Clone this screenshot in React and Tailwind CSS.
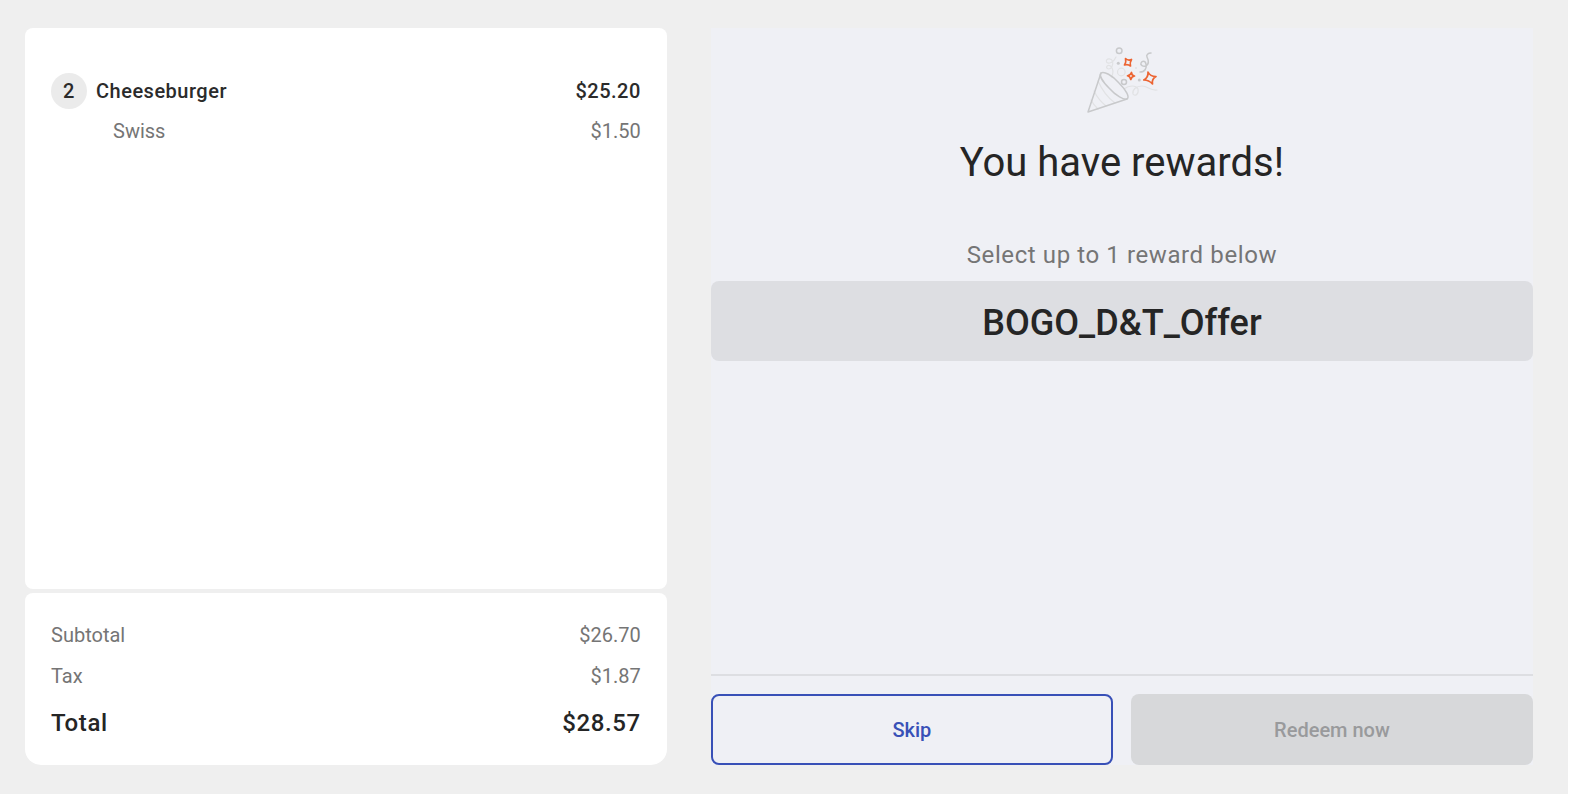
const order = {
  items: [
    {
      qty: 2,
      name: 'Cheeseburger',
      price: '$25.20',
      modifiers: [{ name: 'Swiss', price: '$1.50' }]
    }
  ],
  subtotal: '$26.70',
  tax: '$1.87',
  total: '$28.57'
};

const rewards = ['BOGO_D&T_Offer'];

const ConfettiIcon = () => (
  <svg className="w-[90px] h-[84px]" viewBox="-3 0 90 84" fill="none" strokeLinecap="round" strokeLinejoin="round" aria-hidden="true">
    <g stroke="#e1e2e4" strokeWidth="1.2">
      <path d="M18 45c4 9 10 17 17 22M14 55c3 6 7 11 12 15M11 64c2 4 4 6 7 9" />
      <path d="M36 21c-2 5-8 8-9.500 5-1-4 5-4 6-1 1 4-1 8-4 8-4-1-1-5 2-3 3 3 3 7 1 11" />
      <circle cx="41.300" cy="36" r="3.800" />
      <circle cx="56" cy="32" r="1" fill="#e1e2e4" stroke="none" />
      <path d="M44 53c5-4 12-4 14 0 1 5-3 8-5 5-1-4 3-8 9-8 6 0 8 5 15 4" />
    </g>
    <g stroke="#c8c9cb" strokeWidth="1.5">
      <path d="M21 37 8 76l39-13" />
      <path d="M21 37c3-2 11 2 18 10 7 7 11 14 8 16-3 1-11-3-18-11-7-7-10-13-8-15Z" />
      <circle cx="39.200" cy="14.800" r="2.800" />
      <circle cx="44" cy="46" r="2.500" />
      <path d="M71 17c-3 0-5 2-4 4 2 4 2 7-1 9-3 1-6-1-5-3s4-3 5 1-1 8-6 8" />
    </g>
    <circle cx="38.300" cy="27.300" r="1.500" fill="#c8c9cb" />
    <circle cx="59.300" cy="44" r="1.500" fill="#c8c9cb" />
    <g stroke="#ec6432" strokeWidth="1.700">
      <path d="M45.500 22.500Q48 25 51.500 23.500 49.500 26.500 50.500 30 48 28 44.500 29 46.500 26 45.500 22.500Z" />
      <path d="M51.500 36.500Q51.500 39.500 54.500 40 51.500 40.500 50.800 43.500 50.200 40.500 47.500 39.800 50.500 39.300 51.500 36.500Z" />
      <path d="M68 36Q70 40.500 76 40.500 71.500 43 72.500 48 69 44 63.800 44 68.500 41.500 68 36Z" />
    </g>
  </svg>
);

const SummaryRow = ({ label, value }) => (
  <div className="flex justify-between text-xl leading-[41px] text-[#757575]">
    <dt>{label}</dt>
    <dd>{value}</dd>
  </div>
);

const OrderItem = ({ item }) => (
  <li>
    <div className="flex items-center h-9 text-xl font-medium tracking-wide text-[#2b2b2b]">
      <span className="flex items-center justify-center w-9 h-9 mr-[9px] rounded-full bg-[#ebebeb]">{item.qty}</span>
      <span className="flex-1">{item.name}</span>
      <span>{item.price}</span>
    </div>
    {item.modifiers.map((mod) => (
      <div key={mod.name} className="flex justify-between mt-2 pl-[62px] text-xl text-[#757575]">
        <span>{mod.name}</span>
        <span>{mod.price}</span>
      </div>
    ))}
  </li>
);

const OrderPanel = () => (
  <section className="flex flex-col gap-1 min-w-0 flex-[644]" aria-label="Order">
    <ul className="flex-1 rounded-lg bg-white px-[26px] pt-[45px]">
      {order.items.map((item) => (
        <OrderItem key={item.name} item={item} />
      ))}
    </ul>
    <dl className="rounded-t-lg rounded-b-2xl bg-white px-[26px] pt-[22px] pb-4">
      <SummaryRow label="Subtotal" value={order.subtotal} />
      <SummaryRow label="Tax" value={order.tax} />
      <div className="flex justify-between text-2xl leading-[52px] font-medium tracking-wide text-[#252525]">
        <dt>Total</dt>
        <dd>{order.total}</dd>
      </div>
    </dl>
  </section>
);

const RewardsPanel = () => (
  <section className="flex flex-col min-w-0 flex-[825] bg-[#eff0f5]" aria-label="Rewards">
    <div className="flex flex-1 flex-col items-center pt-2">
      <ConfettiIcon />
      <h1 className="mt-[19px] text-[40px] leading-[48px] text-[#252525]">You have rewards!</h1>
      <p className="mt-[52px] text-2xl leading-8 tracking-wide text-[#757575]">Select up to 1 reward below</p>
      {rewards.map((reward) => (
        <button key={reward} type="button" className="mt-2.5 h-20 w-full rounded-lg bg-[#dddee2] pt-1 text-4xl font-medium text-[#252525]">
          {reward}
        </button>
      ))}
    </div>
    <div className="grid grid-cols-2 gap-[18px] border-t-2 border-[#dddee2] pt-[18px]">
      <button type="button" className="h-[71px] rounded-lg border-2 border-[#3850b7] text-xl font-medium text-[#3850b7]">
        Skip
      </button>
      <button type="button" disabled className="h-[71px] rounded-lg bg-[#d7d8da] text-xl font-medium text-[#999a9c]">
        Redeem now
      </button>
    </div>
  </section>
);

const App = () => (
  <div className="flex min-h-screen flex-col bg-white pr-1.5 pb-2.5 font-[Roboto,sans-serif]">
    <main className="flex flex-1 gap-11 bg-[#efefef] pt-7 pr-[35px] pb-[29px] pl-[25px]">
      <OrderPanel />
      <RewardsPanel />
    </main>
  </div>
);

export default App;
